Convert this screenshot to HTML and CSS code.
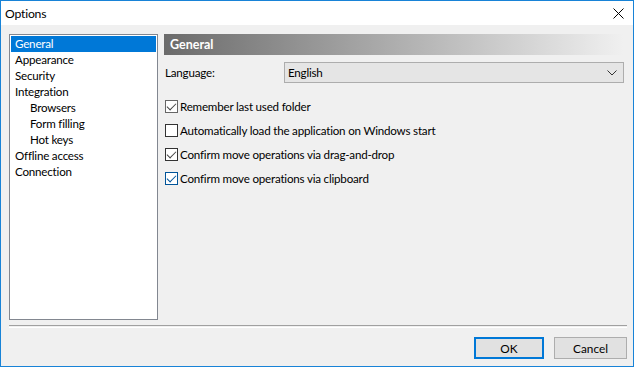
FILE: index.html
```html
<!DOCTYPE html>
<html lang="en">
  <head>
    <meta charset="UTF-8" />
    <title>Options</title>
    <link rel="stylesheet" href="styles.css">
  </head>
  <body>
    <div class="window">
      <div class="titlebar">
        <span class="title">Options</span>
        <svg class="close" width="11" height="11" viewBox="0 0 11 11">
          <path d="M0.5 0.5 L10.5 10.5 M10.5 0.5 L0.5 10.5" stroke="#000" stroke-width="1" />
        </svg>
      </div>

      <div class="content">
        <div class="main">
          <!-- Page tree -->
          <ul class="tree">
            <li class="selected">General</li>
            <li>Appearance</li>
            <li>Security</li>
            <li>Integration</li>
            <li class="sub">Browsers</li>
            <li class="sub">Form filling</li>
            <li class="sub">Hot keys</li>
            <li>Offline access</li>
            <li>Connection</li>
          </ul>

          <div class="page">
            <div class="page-header">General</div>

            <div class="row">
              <span class="label">Language:</span>
              <div class="select">
                <span>English</span>
                <svg class="chevron" width="10" height="6" viewBox="0 0 10 6">
                  <path d="M0.5 0.5 L5 5 L9.5 0.5" fill="none" stroke="#333" stroke-width="1" />
                </svg>
              </div>
            </div>

            <div class="checks">
              <label class="check"><span class="box checked grey"></span>Remember last used folder</label>
              <label class="check"><span class="box"></span>Automatically load the application on Windows start</label>
              <label class="check"><span class="box checked"></span>Confirm move operations via drag-and-drop</label>
              <label class="check"><span class="box checked focus"></span>Confirm move operations via clipboard</label>
            </div>
          </div>
        </div>

        <div class="separator"></div>

        <div class="footer">
          <button class="default">OK</button>
          <button>Cancel</button>
        </div>
      </div>
    </div>
  </body>
</html>
```

FILE: styles.css
```css
html, body {
  margin: 0;
  padding: 0;
}
body {
  font-family: Lato, "Noto Sans", sans-serif;
  font-size: 11.6px;
  letter-spacing: -0.2px;
  color: #000;
  background: #f0f0f0;
}
.window {
  width: 634px;
  height: 367px;
  box-sizing: border-box;
  border: 1px solid #1883d7;
  background: #f0f0f0;
  display: flex;
  flex-direction: column;
}
.titlebar {
  height: 24px;
  background: #fff;
  display: flex;
  align-items: center;
  justify-content: space-between;
  padding: 0 9px 0 4px;
  font-size: 12.2px;
}
.close {
  display: block;
}
.content {
  flex: 1;
  padding: 9px 6px 0 8px;
  display: flex;
  flex-direction: column;
}
.main {
  display: flex;
  gap: 6px;
  height: 286px;
}
.tree {
  list-style: none;
  margin: 0;
  padding: 1px;
  width: 149px;
  box-sizing: border-box;
  border: 1px solid #828790;
  background: #fff;
}
.tree li {
  height: 16px;
  line-height: 16px;
  padding-left: 4px;
  white-space: nowrap;
}
.tree li.sub {
  padding-left: 19px;
}
.tree li.selected {
  background: #0078d7;
  color: #fff;
}
.page {
  flex: 1;
  padding-right: 4px;
}
.page-header {
  height: 21px;
  line-height: 21px;
  padding-left: 6px;
  font-weight: bold;
  font-size: 12.5px;
  letter-spacing: 0;
  color: #fff;
  background: linear-gradient(to right, #6b6b6b, #f0f0f0);
}
.row {
  display: flex;
  align-items: center;
  margin-top: 7px;
  margin-right: -1px;
}
.label {
  width: 119px;
  padding-left: 1px;
}
.select {
  flex: 1;
  height: 21px;
  box-sizing: border-box;
  border: 1px solid #adadad;
  background: #e5e5e5;
  display: flex;
  align-items: center;
  justify-content: space-between;
  padding: 0 6px 0 3px;
}
.checks {
  margin-top: 17px;
  display: flex;
  flex-direction: column;
  gap: 11px;
}
.check {
  display: flex;
  align-items: center;
  height: 13px;
  gap: 2px;
  white-space: nowrap;
}
.box {
  width: 13px;
  height: 13px;
  box-sizing: border-box;
  border: 1px solid #333;
  background: #fff;
  position: relative;
  margin-left: 1px;
}
.box.checked::after {
  content: "";
  position: absolute;
  left: 3px;
  top: 0px;
  width: 4px;
  height: 8px;
  border: solid #444;
  border-width: 0 1px 1px 0;
  transform: rotate(45deg);
}
.box.grey {
  border-color: #666;
}
.box.focus {
  border-color: #005499;
}
.box.focus::after {
  border-color: #005499;
}
.separator {
  margin-top: 5px;
  height: 1px;
  border-top: 1px solid #a0a0a0;
  border-bottom: 1px solid #fff;
}
.footer {
  display: flex;
  justify-content: flex-end;
  gap: 10px;
  margin-top: 9px;
}
button {
  font-family: inherit;
  font-size: 11.8px;
  letter-spacing: 0;
  width: 73px;
  height: 22px;
  box-sizing: border-box;
  border: 1px solid #adadad;
  background: #e1e1e1;
  color: #000;
  padding: 0;
}
button.default {
  width: 70px;
  border: 2px solid #0078d7;
}
```
